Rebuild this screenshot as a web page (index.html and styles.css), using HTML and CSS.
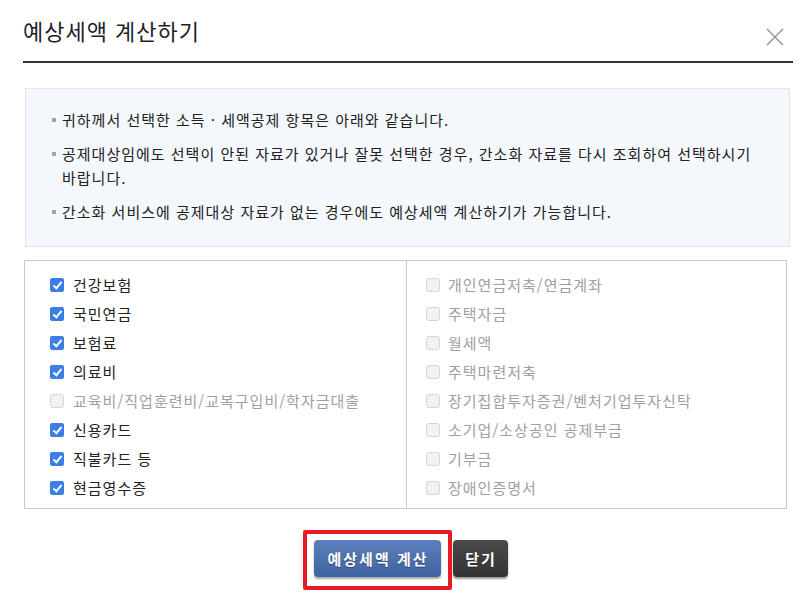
FILE: index.html
```html
<!DOCTYPE html>
<html lang="ko">
<head>
<meta charset="utf-8">
<title>예상세액 계산하기</title>
<link rel="stylesheet" href="styles.css">
</head>
<body>
<div class="modal">
  <div class="modal-head">
    <h1 class="modal-title">예상세액 계산하기</h1>
    <button class="close-btn" aria-label="닫기">
      <svg width="18" height="18" viewBox="0 0 18 18"><path d="M1 1L17 17M17 1L1 17" stroke="#8c90a0" stroke-width="1.3" fill="none"/></svg>
    </button>
  </div>

  <div class="info-box">
    <ul class="info-list">
      <li>귀하께서 선택한 소득 · 세액공제 항목은 아래와 같습니다.</li>
      <li>공제대상임에도 선택이 안된 자료가 있거나 잘못 선택한 경우, 간소화 자료를 다시 조회하여 선택하시기 바랍니다.</li>
      <li>간소화 서비스에 공제대상 자료가 없는 경우에도 예상세액 계산하기가 가능합니다.</li>
    </ul>
  </div>

  <div class="check-table">
    <div class="check-col col-left">
      <label class="check-row"><span class="cb on"></span>건강보험</label>
      <label class="check-row"><span class="cb on"></span>국민연금</label>
      <label class="check-row"><span class="cb on"></span>보험료</label>
      <label class="check-row"><span class="cb on"></span>의료비</label>
      <label class="check-row off"><span class="cb"></span>교육비/직업훈련비/교복구입비/학자금대출</label>
      <label class="check-row"><span class="cb on"></span>신용카드</label>
      <label class="check-row"><span class="cb on"></span>직불카드 등</label>
      <label class="check-row"><span class="cb on"></span>현금영수증</label>
    </div>
    <div class="check-col col-right">
      <label class="check-row off"><span class="cb"></span>개인연금저축/연금계좌</label>
      <label class="check-row off"><span class="cb"></span>주택자금</label>
      <label class="check-row off"><span class="cb"></span>월세액</label>
      <label class="check-row off"><span class="cb"></span>주택마련저축</label>
      <label class="check-row off"><span class="cb"></span>장기집합투자증권/벤처기업투자신탁</label>
      <label class="check-row off"><span class="cb"></span>소기업/소상공인 공제부금</label>
      <label class="check-row off"><span class="cb"></span>기부금</label>
      <label class="check-row off"><span class="cb"></span>장애인증명서</label>
    </div>
  </div>

  <div class="modal-foot">
    <div class="highlight">
      <button class="btn btn-primary">예상세액 계산</button>
    </div>
    <button class="btn btn-dark">닫기</button>
  </div>
</div>
</body>
</html>
```

FILE: styles.css
```css
* { box-sizing: border-box; }
html, body { margin: 0; padding: 0; background: #fff; }
body {
  font-family: "Noto Sans CJK KR", "Noto Sans", sans-serif;
  color: #222;
  font-size: 15px;
  letter-spacing: 1px;
}
.modal {
  width: 803px;
  padding: 0 10px 0 23px;
}
.modal-head {
  height: 63px;
  display: flex;
  align-items: center;
  justify-content: space-between;
  border-bottom: 2px solid #333;
  padding-bottom: 1px;
}
.modal-title {
  margin: 0;
  font-size: 22px;
  font-weight: normal;
  color: #1e1e2a;
  letter-spacing: 1px;
}
.close-btn {
  border: 0;
  background: none;
  padding: 0;
  margin-right: 9px;
  margin-top: 13px;
  width: 18px;
  height: 18px;
  display: flex;
}
.info-box {
  margin: 25px 3px 0 2px;
  background: #f4f7fc;
  border: 1px solid #e2e6ec;
  padding: 19px 18px 22px 26px;
}
.info-list {
  list-style: none;
  margin: 0;
  padding: 0;
}
.info-list li {
  position: relative;
  padding-left: 10px;
  line-height: 24px;
  margin-bottom: 10px;
  color: #222;
}
.info-list li:last-child { margin-bottom: 0; }
.info-list li::before {
  content: "";
  position: absolute;
  left: 0;
  top: 10px;
  width: 4px;
  height: 4px;
  background: #a0a4aa;
}
.check-table {
  margin: 13px 6px 0 1px;
  border: 1px solid #c8c8c8;
  display: grid;
  grid-template-columns: 382px 1fr;
}
.check-col {
  padding: 9px 0 6px;
  display: flex;
  flex-direction: column;
}
.col-left { padding-left: 25px; border-right: 1px solid #c8c8c8; }
.col-right { padding-left: 19px; }
.check-row {
  display: flex;
  align-items: center;
  height: 29px;
  color: #222;
  gap: 9px;
}
.check-row.off { color: #a0a0a0; }
.col-right .check-row { gap: 8px; }
.cb {
  width: 14px;
  height: 14px;
  border-radius: 3px;
  background: #f2f2f2;
  border: 1px solid #d6d6d6;
  flex: none;
  position: relative;
}
.cb.on {
  background: #3b7de9;
  border-color: #3b7de9;
  border-radius: 2px;
}
.cb.on::after {
  content: "";
  position: absolute;
  left: 4px;
  top: 1px;
  width: 3px;
  height: 7px;
  border: solid #fff;
  border-width: 0 2px 2px 0;
  transform: rotate(40deg);
}
.modal-foot {
  display: flex;
  justify-content: center;
  align-items: flex-start;
  margin-top: 21px;
  padding-right: 6px;
}
.highlight {
  border: 4px solid #e51c24;
  border-radius: 2px;
  padding: 6px 7px 9px;
}
.btn {
  height: 37px;
  border: 0;
  border-radius: 4px;
  color: #fff;
  font-family: "Noto Sans CJK KR", sans-serif;
  font-weight: bold;
  font-size: 15px;
  text-shadow: 0 1px 1px rgba(0,0,0,0.35);
  cursor: pointer;
}
.btn-primary {
  width: 127px;
  letter-spacing: 2px;
  background: linear-gradient(#5d80bd, #3f62a0);
  box-shadow: 0 2px 2px rgba(0,0,0,0.35);
  padding: 0 0 0 2px;
}
.btn-dark {
  width: 55px;
  margin-top: 10px;
  margin-left: 1px;
  letter-spacing: 2px;
  background: linear-gradient(#4a4a4a, #333);
  box-shadow: 0 2px 2px rgba(0,0,0,0.4);
  padding: 0 0 0 2px;
}
```
